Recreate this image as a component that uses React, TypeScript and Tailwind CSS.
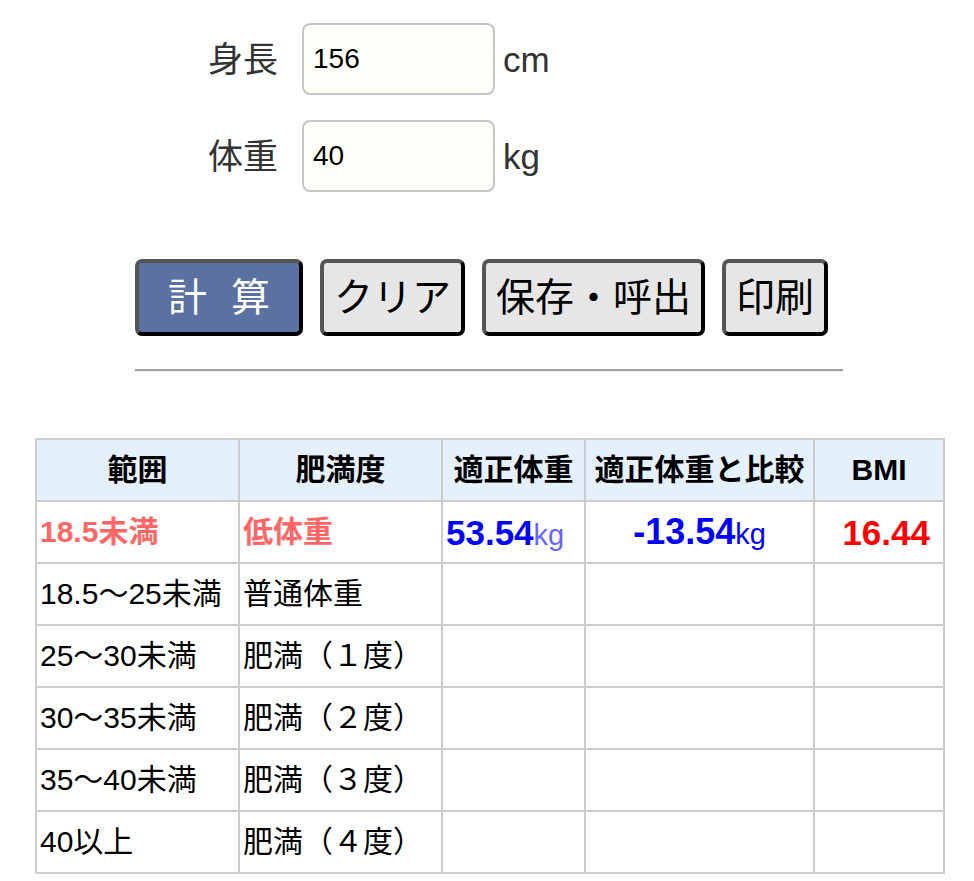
import React from "react";

const font = "font-['Liberation_Sans','Noto_Sans_CJK_JP',sans-serif]";

const rows = [
  ["18.5～25未満", "普通体重"],
  ["25～30未満", "肥満（１度）"],
  ["30～35未満", "肥満（２度）"],
  ["35～40未満", "肥満（３度）"],
  ["40以上", "肥満（４度）"],
];

const FieldRow = ({ label, value, unit }: { label: string; value: string; unit: string }) => (
  <div className="flex items-center">
    <span className="w-[94px] text-[35px] text-[#333] leading-none">{label}</span>
    <input
      defaultValue={value}
      className="w-[193px] h-[72px] rounded-[8px] border-2 border-[#c6c6c6] bg-[#fffef9] px-[9px] text-[28px] text-black outline-none"
    />
    <span className="ml-[8px] text-[35px] text-[#333] leading-none">{unit}</span>
  </div>
);

const Btn = ({ children, primary, className }: { children: React.ReactNode; primary?: boolean; className?: string }) => (
  <button
    className={`h-[77px] rounded-[7px] border-4 border-[#555] border-r-black border-b-black px-[10px] text-[39px] leading-none ${
      primary ? "bg-[#5a71a1] text-white" : "bg-[#e6e6e6] text-black"
    } ${className ?? ""}`}
  >
    {children}
  </button>
);

export default function App() {
  const td = "border-2 border-[#cccccc] h-[62px] px-[3px] text-[30px] leading-none";
  return (
    <div className={`${font} bg-white min-h-screen pt-[23px]`}>
      <div className="ml-[135px] w-[708px]">
        <div className="flex flex-col gap-[25px] pl-[73px]">
          <FieldRow label="身長" value="156" unit="cm" />
          <FieldRow label="体重" value="40" unit="kg" />
        </div>
        <div className="mt-[67px] flex gap-[17px]">
          <Btn primary className="w-[168px] flex items-center justify-center gap-[24px]">
            <span>計</span>
            <span>算</span>
          </Btn>
          <Btn>クリア</Btn>
          <Btn>保存・呼出</Btn>
          <Btn>印刷</Btn>
        </div>
        <div className="mt-[33px] h-[3px] border-t-2 border-t-[#a0a0a0] border-b border-b-[#eeeeee]" />
      </div>
      <table className="mt-[66px] ml-[35px] w-[908px] table-fixed border-collapse">
        <colgroup>
          <col className="w-[203px]" />
          <col className="w-[203px]" />
          <col className="w-[143px]" />
          <col className="w-[229px]" />
          <col className="w-[130px]" />
        </colgroup>
        <thead>
          <tr className="bg-[#e5f0fd]">
            {["範囲", "肥満度", "適正体重", "適正体重と比較", "BMI"].map((h) => (
              <th key={h} className={`${td} font-bold text-black text-center`}>
                {h}
              </th>
            ))}
          </tr>
        </thead>
        <tbody>
          <tr>
            <td className={`${td} font-bold text-[#ff6666]`}>18.5未満</td>
            <td className={`${td} font-bold text-[#ff6666]`}>低体重</td>
            <td className={`${td} text-left whitespace-nowrap`}>
              <span className="text-[35px] font-bold text-[#0000ff]">53.54</span>
              <span className="text-[29px] text-[#6666ff]">kg</span>
            </td>
            <td className={`${td} text-center whitespace-nowrap`}>
              <span className="text-[36px] font-bold text-[#0000ff]">-13.54</span>
              <span className="text-[29px] text-[#0000ff]">kg</span>
            </td>
            <td className={`${td} text-right pr-[13px] text-[35px] font-bold text-[#ff0000]`}>16.44</td>
          </tr>
          {rows.map(([range, label]) => (
            <tr key={range}>
              <td className={`${td} text-black`}>{range}</td>
              <td className={`${td} text-black`}>{label}</td>
              <td className={td} />
              <td className={td} />
              <td className={td} />
            </tr>
          ))}
        </tbody>
      </table>
    </div>
  );
}
